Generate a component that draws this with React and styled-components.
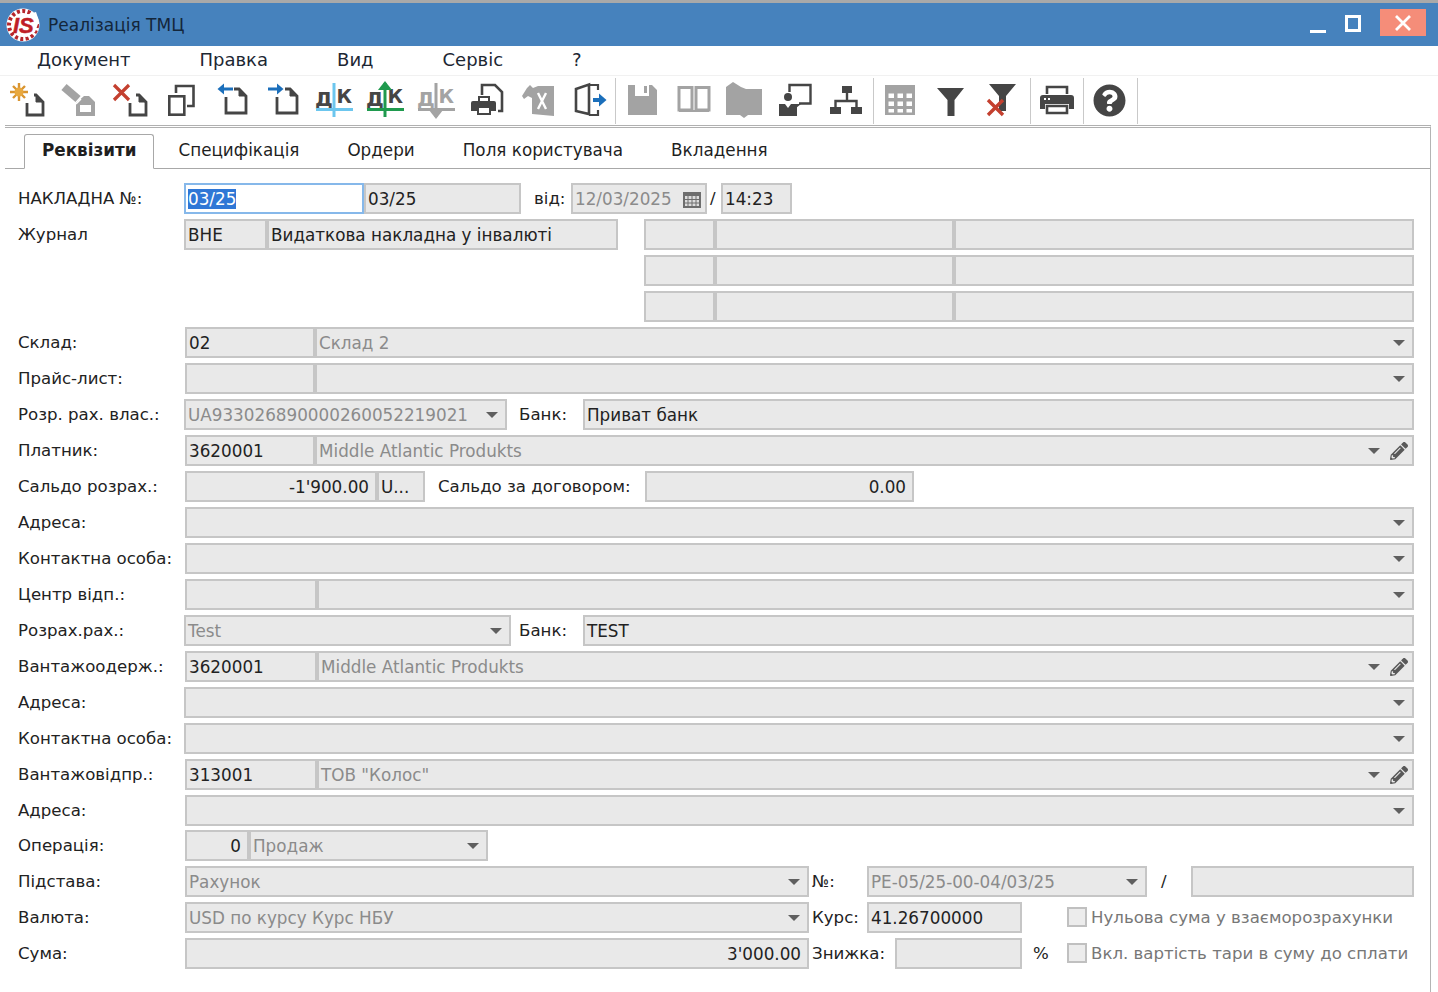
import React from 'react';
import styled, { createGlobalStyle } from 'styled-components';
import { FaPencilAlt, FaQuestionCircle } from 'react-icons/fa';

const DARK = '#454545';
const GREY = '#a3a3a3';
const RED = '#c4402f';
const BLUE = '#1b6fbb';

const GlobalStyle = createGlobalStyle`
  html, body {
    margin: 0;
    padding: 0;
    height: 100%;
    background: #fff;
    overflow: hidden;
  }
  body {
    font-family: 'DejaVu Sans', 'Liberation Sans', sans-serif;
    font-size: 17px;
    color: #222;
  }
`;

const Page = styled.div`
  display: flex;
  flex-direction: column;
  height: 100vh;
`;

const TitleBar = styled.div`
  display: flex;
  align-items: center;
  box-sizing: border-box;
  height: 46px;
  padding: 0 12px 0 5px;
  border-top: 3px solid #a9a9a9;
  background: #4682bd;
`;

const TitleText = styled.div`
  flex: 1;
  margin-left: 7px;
  font-size: 17px;
  color: #14263a;
`;

const Minimize = styled.div`
  width: 16px;
  height: 3px;
  margin: 13px 19px 0 0;
  background: #fff;
`;

const Maximize = styled.div`
  box-sizing: border-box;
  width: 16px;
  height: 17px;
  margin: -3px 19px 0 0;
  border: 3px solid #fff;
`;

const CloseButton = styled.div`
  display: flex;
  align-items: center;
  justify-content: center;
  width: 46px;
  height: 27px;
  margin-top: -4px;
  background: #f58d79;
`;

const MenuBar = styled.div`
  display: flex;
  gap: 69px;
  box-sizing: border-box;
  height: 30px;
  padding: 2px 0 0 37px;
  border-bottom: 1px solid #f1f1f1;
  font-size: 18px;
  line-height: 24px;
  color: #1d2733;
`;

const Toolbar = styled.div`
  display: flex;
  align-items: center;
  box-sizing: border-box;
  height: 49px;
  padding-left: 2px;
`;

const ToolButton = styled.div`
  display: flex;
  align-items: center;
  justify-content: center;
  flex: none;
  width: 51px;
  height: 40px;
`;

const ToolSep = styled.div`
  flex: none;
  width: 1px;
  height: 46px;
  margin-left: ${(p) => p.$ml || 0}px;
  background: #c9c9c9;
`;

const Frame = styled.div`
  flex: 1;
  display: flex;
  flex-direction: column;
  margin-left: 5px;
  margin-right: 7px;
  border-top: 3px double #b0b0b0;
  border-right: 1px solid #b4b4b4;
`;

const TabStrip = styled.div`
  display: flex;
  align-items: flex-end;
  box-sizing: border-box;
  height: 41px;
  padding-left: 19px;
  border-bottom: 1px solid #a8a8a8;
`;

const Tab = styled.div`
  box-sizing: border-box;
  height: ${(p) => (p.$active ? '35px' : '33px')};
  padding: 0 ${(p) => (p.$active ? 17 : 24)}px;
  margin-bottom: ${(p) => (p.$active ? '-1px' : '0')};
  border: ${(p) => (p.$active ? '1px solid #a8a8a8' : 'none')};
  border-bottom: ${(p) => (p.$active ? '1px solid #fff' : 'none')};
  border-radius: 3px 3px 0 0;
  background: #fff;
  font-size: 16.8px;
  font-weight: ${(p) => (p.$active ? 700 : 400)};
  line-height: 31px;
  color: #1f1f1f;
`;

const Form = styled.div`
  display: flex;
  flex-direction: column;
  padding: 14px 16px 0 13px;
`;

const Row = styled.div`
  display: flex;
  align-items: flex-start;
  height: 36px;
  margin-top: ${(p) => (p.$up ? '-1px' : '0')};
`;

const Label = styled.div`
  flex: none;
  width: ${(p) => (p.$w ? `${p.$w}px` : 'auto')};
  margin-left: ${(p) => p.$ml || 0}px;
  font-size: 16.6px;
  line-height: 31px;
  white-space: nowrap;
  color: ${(p) => (p.$muted ? '#777' : '#222')};
`;

const Field = styled.div`
  display: flex;
  align-items: center;
  flex: ${(p) => (p.$w ? 'none' : '1')};
  width: ${(p) => (p.$w ? `${p.$w}px` : 'auto')};
  box-sizing: border-box;
  height: 31px;
  margin-left: ${(p) => p.$ml || 0}px;
  padding: 0 ${(p) => (p.$right ? 6 : 7)}px 0 2px;
  border: 2px solid ${(p) => (p.$focus ? '#86b8ea' : '#c6c6c6')};
  background: ${(p) => (p.$focus ? '#fff' : '#e9e9e9')};
  font-size: 16.8px;
  white-space: nowrap;
  overflow: hidden;
  color: ${(p) => (p.$muted ? '#8b8b8b' : '#222')};
`;

const FieldText = styled.span`
  flex: 1;
  text-align: ${(p) => (p.$right ? 'right' : 'left')};
`;

const Selected = styled.span`
  background: #2f77d6;
  color: #fff;
`;

const Arrow = styled.span`
  flex: none;
  width: 0;
  height: 0;
  margin-left: ${(p) => p.$ml || 0}px;
  border-left: 6px solid transparent;
  border-right: 6px solid transparent;
  border-top: 6px solid #5f5f5f;
`;

const Pencil = styled(FaPencilAlt)`
  flex: none;
  width: 18px;
  height: 18px;
  margin-left: 10px;
  margin-right: -3px;
  color: #595959;
`;

const JournalBlock = styled.div`
  display: flex;
  align-items: flex-start;
`;

const JournalLeft = styled.div`
  display: flex;
  align-items: flex-start;
  width: 600px;
`;

const JournalRight = styled.div`
  flex: 1;
  display: flex;
  flex-direction: column;
  margin-left: 26px;
`;

const Check = styled.div`
  flex: none;
  box-sizing: border-box;
  width: 20px;
  height: 20px;
  margin: 5px 4px 0 ${(p) => p.$ml || 0}px;
  border: 2px solid #c0c0c0;
  background: #ececec;
`;

const Doc = ({ l, r, t, b, gap, c = DARK }) => (
  <g fill="none" stroke={c} strokeWidth="2.8">
    <path d={`M${l} ${t + 8}V${b}H${r}V${t + 7}L${r - 7} ${t}H${gap}`} />
    <path d={`M${r - 7} ${t}V${t + 7}H${r}Z`} fill={c} strokeWidth="1" />
  </g>
);

const Cross = ({ x, y, s, w = 3 }) => (
  <path d={`M${x} ${y}L${x + s} ${y + s}M${x + s} ${y}L${x} ${y + s}`} stroke={RED} strokeWidth={w} fill="none" />
);

const Ic = ({ children }) => (
  <svg width="40" height="40" viewBox="0 0 40 40">{children}</svg>
);

const DK = ({ c, line, stem, children }) => (
  <g>
    <text x="1" y="25" fontFamily="DejaVu Sans, sans-serif" fontWeight="700" fontSize="20" fill={c}>Д</text>
    <text x="22.5" y="22" fontFamily="DejaVu Sans, sans-serif" fontWeight="700" fontSize="19" fill={c}>К</text>
    <path d="M2 28.5H39" stroke={line} strokeWidth="3" />
    <path d="M20 2V36" stroke={stem} strokeWidth="3" />
    {children}
  </g>
);

const tools = [
  <Ic>
    <path d="M11 2V20M2 11H20M5 5L17 17M17 5L5 17" stroke="#d99430" strokeWidth="2.4" />
    <circle cx="11" cy="11" r="4.5" fill="#e8a83f" />
    <Doc l={19} r={35} t={14} b={34} gap={26} />
  </Ic>,
  <Ic>
    <path d="M5 6L19 18" stroke={GREY} strokeWidth="8" />
    <path d="M17 35V22L25 15H30L36 21V35Z" fill={GREY} />
    <path d="M21 31V24H32V31Z" fill="#fff" />
    <path d="M17 23L22 18" stroke="#fff" strokeWidth="1.5" />
  </Ic>,
  <Ic>
    <Cross x={4} y={4} s={15} w={3.2} />
    <Doc l={20} r={36} t={14} b={34} gap={26} />
  </Ic>,
  <Ic>
    <rect x="8.3" y="15.3" width="15" height="18.4" fill="none" stroke={DARK} strokeWidth="2.6" />
    <path d="M15 12V5H32.5V25H26" fill="none" stroke={DARK} strokeWidth="2.6" />
  </Ic>,
  <Ic>
    <path d="M21 8H11" stroke={BLUE} strokeWidth="3" />
    <path d="M12 2.5V13.5L5.5 8Z" fill={BLUE} />
    <Doc l={14} r={34} t={8} b={32} gap={22} />
  </Ic>,
  <Ic>
    <path d="M5 8H15" stroke={BLUE} strokeWidth="3" />
    <path d="M14 2.5V13.5L20.5 8Z" fill={BLUE} />
    <Doc l={14} r={34} t={8} b={32} gap={22} />
  </Ic>,
  <Ic>
    <DK c={DARK} line="#6cc6ee" stem="#6cc6ee" />
  </Ic>,
  <Ic>
    <DK c={DARK} line="#1f9a4e" stem="#1f9a4e">
      <path d="M20 0L27 9H13Z" fill="#1f9a4e" />
    </DK>
  </Ic>,
  <Ic>
    <DK c={GREY} line={GREY} stem={GREY}>
      <path d="M20 38L27 29H13Z" fill={GREY} />
    </DK>
  </Ic>,
  <Ic>
    <path d="M15 14V4H28L35 11V30H31" fill="none" stroke={DARK} strokeWidth="2.6" />
    <path d="M11 15H23V20H27Q29 20 29 22V30H24V34H10V30H4V22Q4 20 6 20H11Z" fill={DARK} />
    <path d="M13 17H21V20H13ZM12 27H22V32H12Z" fill="#fff" />
  </Ic>,
  <Ic>
    <path d="M12 4L15 7L20 5H36V35L14 33V17L10 15L6 18L4 15L9 7Z" fill={GREY} />
    <path d="M20 12L28 28M28 12L20 28" stroke="#fff" strokeWidth="2.4" />
  </Ic>,
  <Ic>
    <path d="M7 8L20 3.5V33L7 30Z" fill="none" stroke={DARK} strokeWidth="2.6" />
    <path d="M20 4H29V9M29 29V34H20" fill="none" stroke={DARK} strokeWidth="2.2" />
    <path d="M24 19H31" stroke={BLUE} strokeWidth="4" />
    <path d="M30 12.5L37.5 19L30 25.5Z" fill={BLUE} />
  </Ic>,
  'sep1',
  <Ic>
    <path d="M6 4H13V15H27V4H30L35 9V34H6Z" fill={GREY} />
    <path d="M22 5H25V12H22Z" fill={GREY} />
  </Ic>,
  <Ic>
    <path d="M6 6.5H19V29H6ZM23 6.5H36V29H23Z" fill="none" stroke={GREY} strokeWidth="3" />
    <path d="M6 30H36" stroke={GREY} strokeWidth="2" />
  </Ic>,
  <Ic>
    <path d="M2 6L9 1L17 6L22 8H38V34H24L20 37L16 34H2Z" fill={GREY} />
  </Ic>,
  <Ic>
    <path d="M14.5 11V4H35.5V22.5H24" fill="none" stroke={DARK} strokeWidth="2.4" />
    <path d="M21 23V27L26 23Z" fill={DARK} />
    <circle cx="13" cy="16" r="4" fill={DARK} />
    <path d="M4 23H10L13 27L16 23H22V35H4Z" fill={DARK} />
  </Ic>,
  <Ic>
    <path d="M16 5H26V12H16ZM4 26H15V33H4ZM25 26H36V33H25Z" fill={DARK} />
    <path d="M21 12V20M9.5 26V20H30.5V26" fill="none" stroke={DARK} strokeWidth="2.4" />
  </Ic>,
  'sep2',
  <Ic>
    <rect x="5" y="4" width="30" height="30" fill={GREY} />
    <path d="M8.5 12.5H14V17H8.5ZM17.5 12.5H23V17H17.5ZM26.5 12.5H32V17H26.5ZM8.5 20.5H14V25H8.5ZM17.5 20.5H23V25H17.5ZM26.5 20.5H32V25H26.5ZM8.5 28H14V31.5H8.5ZM17.5 28H23V31.5H17.5ZM26.5 28H32V31.5H26.5Z" fill="#fff" />
  </Ic>,
  <Ic>
    <path d="M6 7H33L23.5 19V35H16.5V19Z" fill={DARK} />
  </Ic>,
  <Ic>
    <path d="M7 3H34L24 15V30H17V15Z" fill={DARK} />
    <Cross x={6} y={19} s={15} w={3.4} />
  </Ic>,
  'sep3',
  <Ic>
    <path d="M10 13V6H30V13" fill="none" stroke={DARK} strokeWidth="2.6" />
    <path d="M6 14H34Q37 14 37 17V28H32V23H8V28H3V17Q3 14 6 14Z" fill={DARK} />
    <path d="M10 25H30V32H10Z" fill="none" stroke={DARK} strokeWidth="2.6" />
    <path d="M7 17H9V19H7ZM11 17H13V19H11Z" fill="#fff" />
  </Ic>,
  'sep1',
  <FaQuestionCircle size={33} color={DARK} />,
  'sep2',
];

const Logo = () => (
  <svg width="36" height="36" viewBox="0 0 36 36">
    <circle cx="18" cy="18" r="16.5" fill="#fff" />
    <circle cx="18" cy="18" r="14" fill="none" stroke="#b5262b" strokeWidth="4" strokeDasharray="3 2.4" />
    <path d="M17 9L31 5L34 14L30 25L22 30L9 27Z" fill="#fff" />
    <text x="8" y="26" fontFamily="Liberation Sans, sans-serif" fontWeight="700" fontStyle="italic" fontSize="22" fill="#bf1e26" stroke="#bf1e26" strokeWidth="0.5">IS</text>
  </svg>
);

const Drop = ({ w, ml, children }) => (
  <Field $w={w} $ml={ml} $muted>
    <FieldText>{children}</FieldText>
    <Arrow />
  </Field>
);

const WithCode = ({ code, w = 130, edit, text }) => (
  <>
    <Field $w={w}><FieldText>{code}</FieldText></Field>
    <Field $muted>
      <FieldText>{text}</FieldText>
      <Arrow />
      {edit && <Pencil />}
    </Field>
  </>
);

export default function App() {
  return (
    <Page>
      <GlobalStyle />
      <TitleBar>
        <Logo />
        <TitleText>Реалізація ТМЦ</TitleText>
        <Minimize />
        <Maximize />
        <CloseButton>
          <svg width="18" height="18" viewBox="0 0 18 18">
            <path d="M2 2L16 16M16 2L2 16" stroke="#fff" strokeWidth="2.8" />
          </svg>
        </CloseButton>
      </TitleBar>

      <MenuBar>
        <span>Документ</span>
        <span>Правка</span>
        <span>Вид</span>
        <span>Сервіс</span>
        <span>?</span>
      </MenuBar>

      <Toolbar>
        {tools.map((t, i) =>
          typeof t === 'string'
            ? <ToolSep key={i} $ml={Number(t.slice(3))} />
            : <ToolButton key={i}>{t}</ToolButton>
        )}
      </Toolbar>

      <Frame>
        <TabStrip>
          <Tab $active>Реквізити</Tab>
          <Tab>Специфікація</Tab>
          <Tab>Ордери</Tab>
          <Tab>Поля користувача</Tab>
          <Tab>Вкладення</Tab>
        </TabStrip>

        <Form>
          <Row>
            <Label $w={166}>НАКЛАДНА №:</Label>
            <Field $w={180} $focus><Selected>03/25</Selected></Field>
            <Field $w={157}>03/25</Field>
            <Label $ml={13} $w={37}>від:</Label>
            <Field $w={136} $muted>
              <FieldText>12/03/2025</FieldText>
              <svg width="20" height="18" viewBox="0 0 20 18" style={{ marginRight: -4 }}>
                <path d="M1 2H19V18H1Z" fill="#6e6e6e" />
                <path d="M3 6H17V16H3Z" fill="#ddd" />
                <path d="M6 6V16M10 6V16M14 6V16M3 9.5H17M3 13H17" stroke="#6e6e6e" strokeWidth="1" />
              </svg>
            </Field>
            <Label $ml={3} $w={11}>/</Label>
            <Field $w={71}>14:23</Field>
          </Row>

          <JournalBlock>
            <JournalLeft>
              <Label $w={166}>Журнал</Label>
              <Field $w={83}>ВНЕ</Field>
              <Field>Видаткова накладна у інвалюті</Field>
            </JournalLeft>
            <JournalRight>
              {[0, 1, 2].map((n) => (
                <Row key={n}>
                  <Field $w={71} />
                  <Field $w={239} />
                  <Field />
                </Row>
              ))}
            </JournalRight>
          </JournalBlock>

          <Row>
            <Label $w={167}>Склад:</Label>
            <WithCode code="02" text="Склад 2" />
          </Row>
          <Row>
            <Label $w={167}>Прайс-лист:</Label>
            <WithCode />
          </Row>
          <Row>
            <Label $w={166}>Розр. рах. влас.:</Label>
            <Drop w={323}>UA933026890000260052219021</Drop>
            <Label $ml={12} $w={64}>Банк:</Label>
            <Field>Приват банк</Field>
          </Row>
          <Row>
            <Label $w={167}>Платник:</Label>
            <WithCode code="3620001" text="Middle Atlantic Produkts" edit />
          </Row>
          <Row>
            <Label $w={167}>Сальдо розрах.:</Label>
            <Field $w={192} $right><FieldText $right>-1'900.00</FieldText></Field>
            <Field $w={48}>U...</Field>
            <Label $ml={13} $w={207}>Сальдо за договором:</Label>
            <Field $w={269} $right><FieldText $right>0.00</FieldText></Field>
          </Row>
          <Row>
            <Label $w={167}>Адреса:</Label>
            <Drop />
          </Row>
          <Row>
            <Label $w={167}>Контактна особа:</Label>
            <Drop />
          </Row>
          <Row>
            <Label $w={167}>Центр відп.:</Label>
            <WithCode w={132} />
          </Row>
          <Row>
            <Label $w={166}>Розрах.рах.:</Label>
            <Drop w={327}>Test</Drop>
            <Label $ml={8} $w={64}>Банк:</Label>
            <Field>TEST</Field>
          </Row>
          <Row>
            <Label $w={167}>Вантажоодерж.:</Label>
            <WithCode w={132} code="3620001" text="Middle Atlantic Produkts" edit />
          </Row>
          <Row>
            <Label $w={166}>Адреса:</Label>
            <Drop />
          </Row>
          <Row>
            <Label $w={166}>Контактна особа:</Label>
            <Drop />
          </Row>
          <Row>
            <Label $w={167}>Вантажовідпр.:</Label>
            <WithCode w={132} code="313001" text={'ТОВ "Колос"'} edit />
          </Row>
          <Row>
            <Label $w={167}>Адреса:</Label>
            <Drop />
          </Row>
          <Row $up>
            <Label $w={167}>Операція:</Label>
            <Field $w={64} $right><FieldText $right>0</FieldText></Field>
            <Drop w={239}>Продаж</Drop>
          </Row>
          <Row>
            <Label $w={167}>Підстава:</Label>
            <Drop w={624}>Рахунок</Drop>
            <Label $ml={3} $w={55}>№:</Label>
            <Drop w={280}>РЕ-05/25-00-04/03/25</Drop>
            <Label $ml={14} $w={30}>/</Label>
            <Field />
          </Row>
          <Row>
            <Label $w={167}>Валюта:</Label>
            <Drop w={624}>USD по курсу Курс НБУ</Drop>
            <Label $ml={3} $w={55}>Курс:</Label>
            <Field $w={155}>41.26700000</Field>
            <Check $ml={45} />
            <Label $muted>Нульова сума у взаєморозрахунки</Label>
          </Row>
          <Row>
            <Label $w={167}>Сума:</Label>
            <Field $w={624} $right><FieldText $right>3'000.00</FieldText></Field>
            <Label $ml={3} $w={83}>Знижка:</Label>
            <Field $w={127} />
            <Label $ml={11} $w={34}>%</Label>
            <Check />
            <Label $muted>Вкл. вартість тари в суму до сплати</Label>
          </Row>
        </Form>
      </Frame>
    </Page>
  );
}
